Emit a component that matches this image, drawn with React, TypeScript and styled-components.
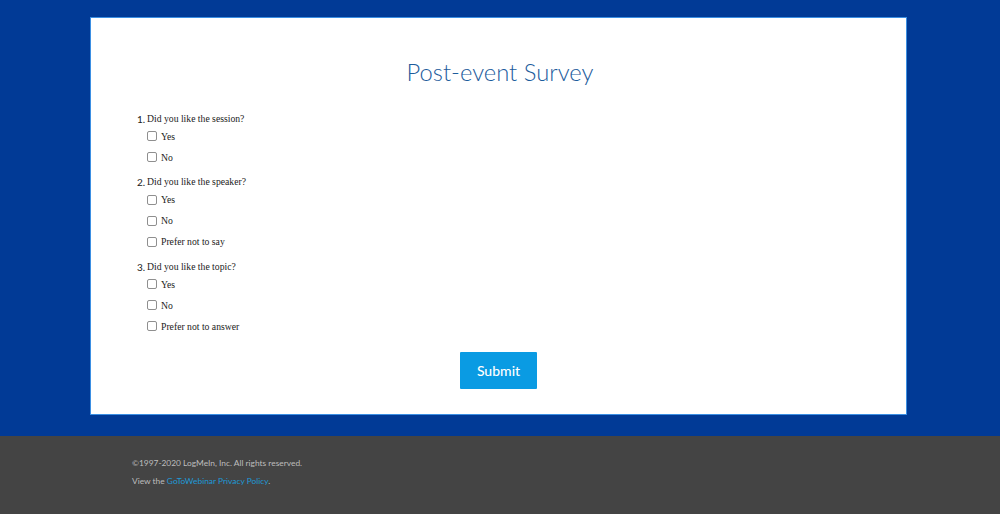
import React from "react";
import styled, { createGlobalStyle } from "styled-components";

const GlobalStyle = createGlobalStyle`
  html, body {
    margin: 0;
    padding: 0;
    background: #444444;
  }
  * {
    box-sizing: border-box;
  }
`;

const questions = [
  { id: 1, text: "Did you like the session?", options: ["Yes", "No"] },
  {
    id: 2,
    text: "Did you like the speaker?",
    options: ["Yes", "No", "Prefer not to say"],
  },
  {
    id: 3,
    text: "Did you like the topic?",
    options: ["Yes", "No", "Prefer not to answer"],
  },
];

export default function App() {
  return (
    <>
      <GlobalStyle />
      <Page>
        <Hero>
          <Card>
            <Title>Post-event Survey</Title>
            <QuestionList>
              {questions.map((q) => (
                <Question key={q.id}>
                  <QuestionTitle>
                    <Number>{q.id}.</Number>
                    {q.text}
                  </QuestionTitle>
                  {q.options.map((opt) => (
                    <Option key={opt}>
                      <Checkbox type="checkbox" />
                      {opt}
                    </Option>
                  ))}
                </Question>
              ))}
            </QuestionList>
            <ButtonRow>
              <SubmitButton>Submit</SubmitButton>
            </ButtonRow>
          </Card>
        </Hero>
        <Footer>
          <FooterInner>
            <FooterLine>©1997-2020 LogMeIn, Inc. All rights reserved.</FooterLine>
            <FooterLine>
              View the <FooterLink href="#">GoToWebinar Privacy Policy</FooterLink>.
            </FooterLine>
          </FooterInner>
        </Footer>
      </Page>
    </>
  );
}

const Page = styled.div`
  min-height: 514px;
  display: flex;
  flex-direction: column;
`;

const Hero = styled.div`
  background: #013a96;
  padding: 17px 3px 21px 0;
`;

const Card = styled.div`
  width: 817px;
  margin: 0 auto;
  background: #ffffff;
  border: 1px solid #3b8fe3;
  padding: 39px 0 25px 46px;
`;

const Title = styled.h1`
  margin: 0 0 0 -46px;
  padding-left: 3px;
  text-align: center;
  font-family: Lato, "Open Sans", sans-serif;
  font-weight: 300;
  font-size: 23.8px;
  line-height: 30px;
  color: #1d5c9c;
`;

const QuestionList = styled.div`
  margin-top: 24.5px;
  display: flex;
  flex-direction: column;
  gap: 7.5px;
  font-family: "Liberation Serif", "Times New Roman", serif;
  font-size: 9.7px;
  color: #222222;
`;

const Question = styled.div`
  display: flex;
  flex-direction: column;
`;

const QuestionTitle = styled.div`
  display: flex;
  line-height: 14px;
`;

const Number = styled.span`
  width: 10px;
  font-family: Lato, sans-serif;
  font-size: 10px;
`;

const Option = styled.label`
  display: flex;
  align-items: center;
  gap: 4px;
  height: 21px;
  padding-left: 10px;
`;

const Checkbox = styled.input`
  appearance: none;
  margin: 0;
  width: 10px;
  height: 10px;
  border: 1px solid #8f8f8f;
  border-radius: 2px;
  background: #fff;
`;

const ButtonRow = styled.div`
  display: flex;
  justify-content: center;
  margin: 15.5px 0 0 -46px;
`;

const SubmitButton = styled.button`
  width: 77px;
  height: 37px;
  border: none;
  border-radius: 1px;
  background: #0a9be3;
  color: #ffffff;
  font-family: Lato, "Open Sans", sans-serif;
  font-size: 14px;
  font-weight: 500;
`;

const Footer = styled.footer`
  flex: 1;
  background: #444444;
  padding: 22px 0 24px;
`;

const FooterInner = styled.div`
  width: 736px;
  margin: 0 auto;
  display: flex;
  flex-direction: column;
  gap: 7px;
`;

const FooterLine = styled.div`
  font-family: Lato, "Open Sans", sans-serif;
  font-size: 8.4px;
  line-height: 11px;
  color: #bdbdbd;
`;

const FooterLink = styled.a`
  color: #1e9ad8;
  text-decoration: none;
`;
